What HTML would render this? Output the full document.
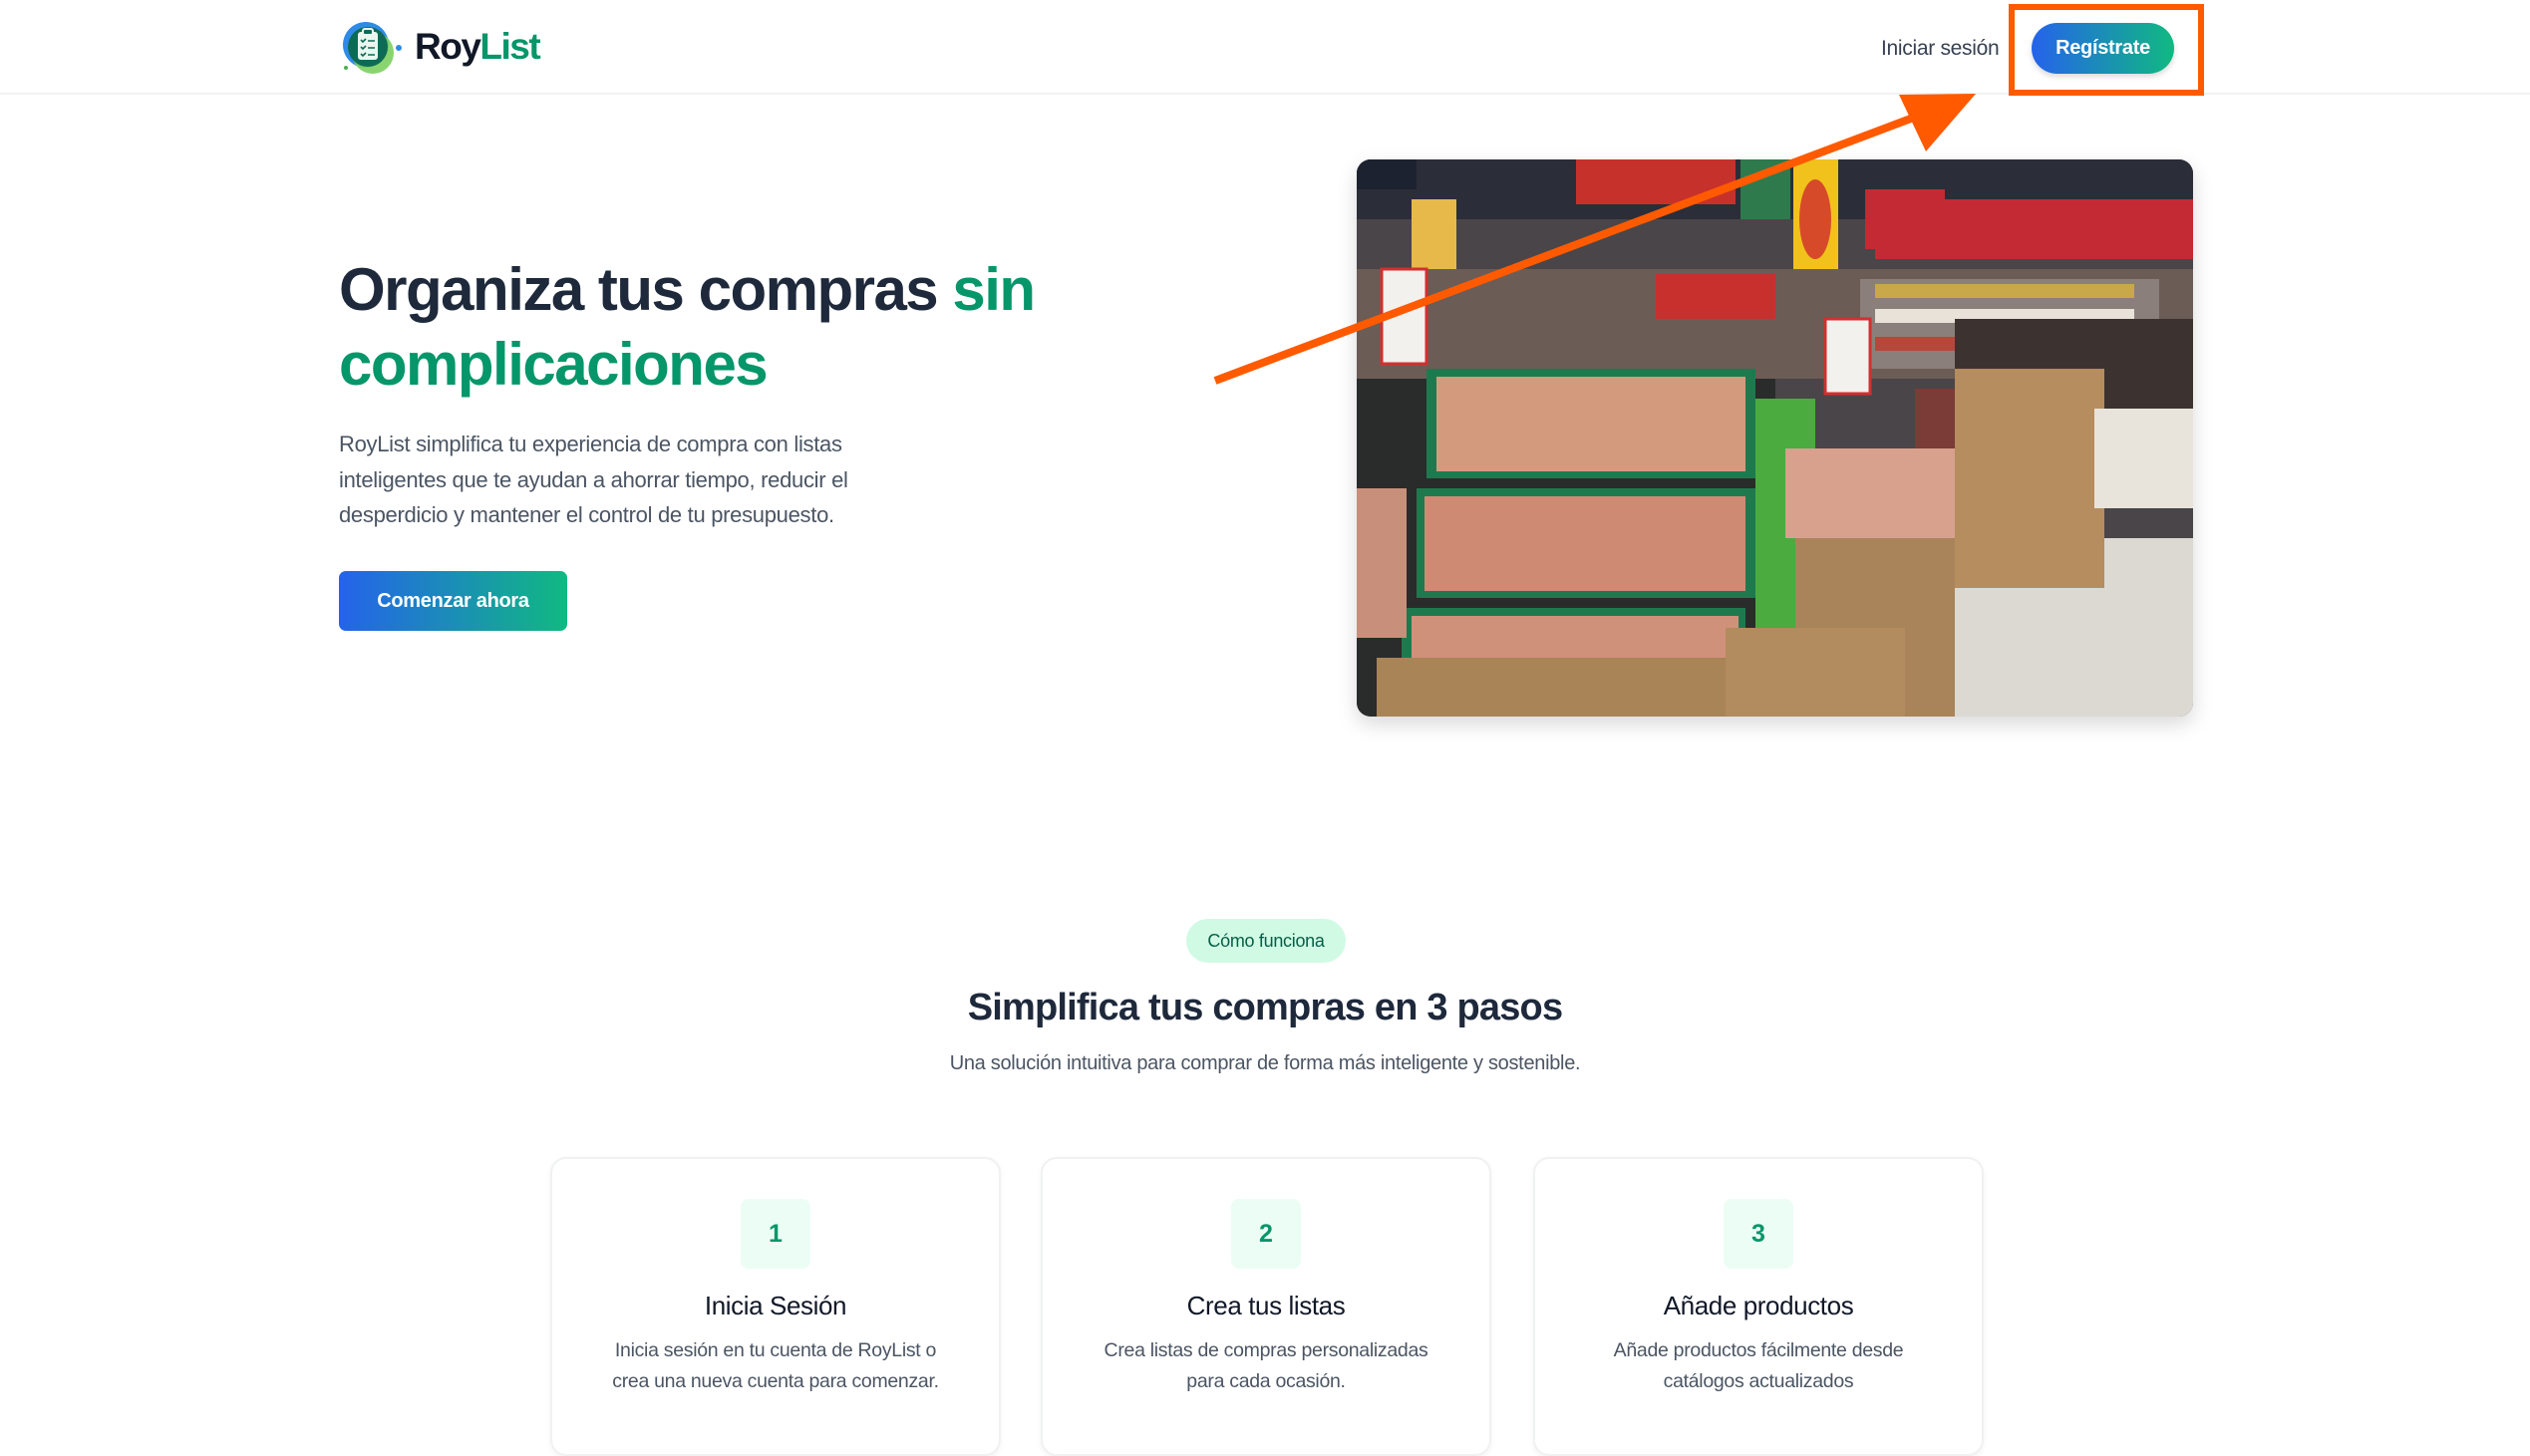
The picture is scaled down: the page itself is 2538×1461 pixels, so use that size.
<!DOCTYPE html>
<html><head><meta charset="utf-8"><style>
*{margin:0;padding:0;box-sizing:border-box}
body{width:2538px;height:1440px;overflow:hidden;background:#fff;font-family:"Liberation Sans",sans-serif;position:relative;color:#1f2937}
.abs{position:absolute}
.nav{left:0;top:0;width:2538px;height:95px;border-bottom:2px solid #f1f2f4}
.logo{left:416px;top:26px;font-size:37px;font-weight:700;letter-spacing:-1.5px;color:#111827}
.logo span{color:#059669}
.login{left:1887px;top:37px;font-size:21px;color:#374151;letter-spacing:-.3px}
.reg{left:2038px;top:23px;width:143px;height:51px;border-radius:26px;background:linear-gradient(90deg,#2563eb,#10b981);color:#fff;font-weight:700;font-size:20px;display:flex;align-items:center;justify-content:center;box-shadow:0 3px 6px rgba(0,0,0,.15);letter-spacing:-.3px}
.hl{left:2015px;top:4px;width:196px;height:92px;border:6px solid #ff5a00}
h1{position:absolute;left:340px;top:253px;font-size:60px;line-height:75px;font-weight:700;color:#1e293b;letter-spacing:-1.5px}
h1 span{color:#059669}
.p{left:340px;top:428px;font-size:22px;line-height:35.5px;color:#4b5563;letter-spacing:-.3px}
.cta{left:340px;top:573px;width:229px;height:60px;border-radius:7px;background:linear-gradient(90deg,#2563eb,#10b981);color:#fff;font-weight:700;font-size:20px;display:flex;align-items:center;justify-content:center;letter-spacing:-.3px}
.img{left:1361px;top:160px;width:839px;height:559px;border-radius:14px;overflow:hidden;box-shadow:0 8px 20px rgba(0,0,0,.15)}
.badge{left:1190px;top:922px;width:160px;height:44px;border-radius:22px;background:#d1fae5;color:#065f46;font-size:18px;display:flex;align-items:center;justify-content:center;letter-spacing:-.3px}
.h2{left:0;width:2538px;top:990px;text-align:center;font-size:38px;font-weight:700;color:#1e293b;letter-spacing:-.8px}
.sub{left:0;width:2538px;top:1056px;text-align:center;font-size:20px;color:#4b5563;letter-spacing:-.3px}
.card{top:1161px;width:452px;height:300px;border:2px solid #f0f1f3;border-radius:16px;box-shadow:0 2px 6px rgba(0,0,0,.05);text-align:center}
.num{margin:40px auto 0;width:70px;height:70px;border-radius:8px;background:#ecfdf5;color:#059669;font-weight:700;font-size:25px;display:flex;align-items:center;justify-content:center}
.ct{margin-top:22px;font-size:26px;color:#111827;letter-spacing:-.4px}
.cd{margin-top:14px;font-size:19.5px;line-height:31px;color:#4b5563;letter-spacing:-.3px}
</style></head><body>
<div class="abs nav"></div>
<svg class="abs" style="left:340px;top:20px" width="66" height="56" viewBox="0 0 66 56">
<circle cx="27" cy="25" r="23" fill="#2f8be6"/><circle cx="34" cy="33" r="21" fill="#7ccf5e" opacity=".9"/><circle cx="29" cy="27" r="20" fill="#0d6b55"/>
<rect x="19" y="12" width="20" height="28" rx="3" fill="#e9f7ef"/><rect x="24" y="9" width="10" height="6" rx="2" fill="#0d6b55" stroke="#e9f7ef" stroke-width="2"/>
<path d="M22 20l2 2 3-3M22 27l2 2 3-3M22 34l2 2 3-3" stroke="#0d6b55" stroke-width="1.6" fill="none"/>
<path d="M29 21h7M29 28h7M29 35h7" stroke="#0d6b55" stroke-width="1.6"/>
<circle cx="60" cy="28" r="3" fill="#2f8be6"/><circle cx="7" cy="48" r="2" fill="#4caf50"/></svg>
<div class="abs logo">Roy<span>List</span></div>
<div class="abs login">Iniciar sesión</div>
<div class="abs reg">Regístrate</div>
<div class="abs hl"></div>
<h1>Organiza tus compras <span>sin<br>complicaciones</span></h1>
<div class="abs p">RoyList simplifica tu experiencia de compra con listas<br>inteligentes que te ayudan a ahorrar tiempo, reducir el<br>desperdicio y mantener el control de tu presupuesto.</div>
<div class="abs cta">Comenzar ahora</div>
<div class="abs img"><svg width="839" height="559" viewBox="0 0 839 559">
<rect width="839" height="559" fill="#4a4548"/>
<rect y="0" width="839" height="60" fill="#2b2d38"/>
<rect x="0" y="0" width="60" height="30" fill="#1d2230"/>
<rect x="520" y="40" width="319" height="60" fill="#c42a34"/>
<rect x="510" y="30" width="80" height="60" fill="#c42a34"/>
<rect x="220" y="0" width="160" height="45" fill="#c7312c"/>
<rect x="438" y="0" width="45" height="160" fill="#f1c21b"/><ellipse cx="460" cy="60" rx="16" ry="40" fill="#d64a2a"/>
<rect x="385" y="0" width="50" height="60" fill="#2e7a4d"/>
<rect x="55" y="40" width="45" height="80" fill="#e6b94a"/>
<rect x="0" y="110" width="839" height="110" fill="#6b5c55"/>
<rect x="505" y="120" width="300" height="90" fill="#8a7f7a"/>
<rect x="520" y="125" width="260" height="14" fill="#c9a84a"/><rect x="520" y="150" width="260" height="14" fill="#e8e2d8"/><rect x="520" y="178" width="260" height="14" fill="#b5483a"/>
<rect x="300" y="115" width="120" height="45" fill="#c8302d"/>
<rect x="600" y="160" width="239" height="120" fill="#3c3230"/>
<rect x="560" y="230" width="140" height="190" fill="#7b3b36"/>
<rect x="620" y="250" width="130" height="160" fill="#a8483c"/>
<rect x="0" y="220" width="420" height="339" fill="#2a2b2b"/>
<rect x="70" y="210" width="330" height="110" fill="#1e7a4e"/><rect x="80" y="218" width="310" height="95" fill="#d49a7e"/>
<rect x="60" y="330" width="340" height="110" fill="#1e7a4e"/><rect x="68" y="338" width="322" height="95" fill="#cf8a74"/>
<rect x="45" y="450" width="345" height="80" fill="#1e7a4e"/><rect x="55" y="458" width="328" height="68" fill="#d0917a"/>
<rect x="400" y="240" width="60" height="240" fill="#4bab3f"/>
<rect x="0" y="330" width="50" height="150" fill="#c8907a"/>
<rect x="430" y="290" width="190" height="90" fill="#d7a18e"/>
<rect x="440" y="380" width="170" height="179" fill="#a9845a"/>
<rect x="370" y="470" width="180" height="89" fill="#b28b5e"/>
<rect x="20" y="500" width="350" height="59" fill="#a98457"/>
<rect x="600" y="380" width="239" height="179" fill="#dcd9d3"/>
<rect x="600" y="210" width="150" height="220" fill="#b68d5e"/>
<rect x="740" y="250" width="99" height="100" fill="#e8e4dc"/>
<rect x="470" y="160" width="45" height="75" fill="#f3f1ee" stroke="#d32f2f" stroke-width="3"/>
<rect x="25" y="110" width="45" height="95" fill="#f3f1ee" stroke="#d32f2f" stroke-width="3"/>
</svg></div>
<svg class="abs" style="left:0;top:0" width="2538" height="450"><line x1="1219" y1="382" x2="1930" y2="114" stroke="#ff5a00" stroke-width="8"/><polygon points="1982,94 1905,95 1932,152" fill="#ff5a00"/></svg>
<div class="abs badge">Cómo funciona</div>
<div class="abs h2">Simplifica tus compras en 3 pasos</div>
<div class="abs sub">Una solución intuitiva para comprar de forma más inteligente y sostenible.</div>
<div class="abs card" style="left:552px"><div class="num">1</div><div class="ct">Inicia Sesión</div><div class="cd">Inicia sesión en tu cuenta de RoyList o<br>crea una nueva cuenta para comenzar.</div></div>
<div class="abs card" style="left:1044px"><div class="num">2</div><div class="ct">Crea tus listas</div><div class="cd">Crea listas de compras personalizadas<br>para cada ocasión.</div></div>
<div class="abs card" style="left:1538px"><div class="num">3</div><div class="ct">Añade productos</div><div class="cd">Añade productos fácilmente desde<br>catálogos actualizados</div></div>
</body></html>
